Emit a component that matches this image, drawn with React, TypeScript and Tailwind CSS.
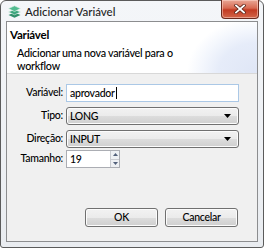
import React from "react";

function AppIcon() {
  return (
    <svg width="13" height="13" viewBox="0 0 13 13">
      <path d="M6.5 7.5 L12.5 10 L6.5 12.8 L0.5 10 Z" fill="#2f8f6a" />
      <path d="M6.5 4.5 L12.5 7 L6.5 9.8 L0.5 7 Z" fill="#3aa57c" stroke="#e9f5ef" strokeWidth="0.6" />
      <path d="M6.5 0.8 L12.5 3.6 L6.5 6.6 L0.5 3.6 Z" fill="#52bb90" stroke="#e9f5ef" strokeWidth="0.6" />
    </svg>
  );
}

function ComboArrow() {
  return (
    <svg width="7" height="4" viewBox="0 0 7 4">
      <path d="M0 0 H7 L3.5 4 Z" fill="#000" />
    </svg>
  );
}

function Combo({ value }: { value: string }) {
  return (
    <div className="flex h-[18px] items-center justify-between rounded-[3px] border border-[#707070] bg-[linear-gradient(#f2f2f2,#ebebeb_50%,#dddddd_50%,#cfcfcf)] pl-[3px] pr-[7px] shadow-[inset_0_0_0_1px_#fcfcfc]">
      <span className="leading-none">{value}</span>
      <ComboArrow />
    </div>
  );
}

export default function App() {
  return (
    <div
      className="relative flex h-[248px] w-[264px] flex-col rounded-t-[6px] rounded-b-[3px] border border-[#5b5b5b] bg-[linear-gradient(#f4f6f9,#e9ecf0)] text-[10.5px] font-medium tracking-[-0.25px] text-black"
      style={{ fontFamily: 'Lato, "Noto Sans", sans-serif' }}
    >
      {/* title bar */}
      <div className="flex h-[20px] items-start">
        <div className="ml-[7px] mt-[4px]">
          <AppIcon />
        </div>
        <span className="ml-[4px] mt-[3px] text-[11.5px] leading-[16px] tracking-normal text-[#1e1e1e]">Adicionar Variável</span>
        <div className="ml-auto mr-[4px] -mt-px flex h-[19px] w-[38px] items-center justify-center rounded-b-[4px] border border-t-0 border-[#6b2a1e] bg-[linear-gradient(#e9a796,#d86a52_45%,#c23a22_55%,#d2664a)] shadow-[inset_0_0_0_1px_rgba(255,220,210,0.5)]">
          <svg width="12" height="10" viewBox="0 0 12 10">
            <path d="M2 1.5 L10 8.5 M10 1.5 L2 8.5" stroke="#5a2418" strokeWidth="3.4" strokeLinecap="square" />
            <path d="M2 1.5 L10 8.5 M10 1.5 L2 8.5" stroke="#ffffff" strokeWidth="1.8" strokeLinecap="square" />
          </svg>
        </div>
      </div>

      {/* client */}
      <div className="mx-[5px] mb-[5px] flex flex-1 flex-col border border-[#8c8d8f] bg-[#f0f0f0]">
        {/* header */}
        <div className="h-[52px] border-b border-[#d8d8d8] bg-[radial-gradient(ellipse_70px_55px_at_100%_100%,#dfe6f6_0%,#e6ecf9_55%,#f4f7fd_80%,#ffffff_100%)] pl-[3px] pt-[6px]">
          <div className="text-[11.5px] font-bold leading-[14px] tracking-[-0.2px]">Variável</div>
          <div className="ml-[7px] mt-[4px] w-[165px] text-[10.75px] leading-[13px]">
            Adicionar uma nova variável para o workflow
          </div>
        </div>

        {/* form */}
        <div className="mt-[10px] grid grid-cols-[56px_1fr] items-center gap-x-[3px] pr-[18px]">
          <span className="text-right">Variável:</span>
          <div className="flex h-[18px] items-center border border-[#abc8e6] bg-white pl-[3px] leading-none">
            aprovador<span className="ml-px inline-block h-[12px] w-px bg-black" />
          </div>

          <span className="mt-[5px] text-right">Tipo:</span>
          <div className="mt-[5px]">
            <Combo value="LONG" />
          </div>

          <span className="mt-[5px] text-right">Direção:</span>
          <div className="mt-[5px]">
            <Combo value="INPUT" />
          </div>

          <span className="mt-[2px] text-right">Tamanho:</span>
          <div className="mt-[2px] flex h-[18px] w-[54px] items-center border border-[#abadb3] bg-white pl-[3px]">
            <span className="flex-1 leading-none">19</span>
            <div className="flex h-full w-[9px] flex-col">
              <div className="flex flex-1 items-center justify-center border-b border-l border-[#c9cbd0] bg-[#eef0f3]">
                <svg width="5" height="3" viewBox="0 0 5 3"><path d="M0 3 L2.5 0 L5 3 Z" fill="#52607a" /></svg>
              </div>
              <div className="flex flex-1 items-center justify-center border-l border-[#c9cbd0] bg-[#eef0f3]">
                <svg width="5" height="3" viewBox="0 0 5 3"><path d="M0 0 L2.5 3 L5 0 Z" fill="#52607a" /></svg>
              </div>
            </div>
          </div>
        </div>

        {/* buttons */}
        <div className="mt-auto mb-[14px] flex justify-end gap-[7px] pr-[19px]">
          <button className="h-[19px] w-[73px] rounded-[3px] border border-[#707070] bg-[linear-gradient(#f2f2f2,#ebebeb_50%,#dddddd_50%,#cfcfcf)] leading-none shadow-[inset_0_0_0_1px_#fcfcfc]">
            OK
          </button>
          <button className="h-[19px] w-[73px] rounded-[3px] border border-[#707070] bg-[linear-gradient(#f2f2f2,#ebebeb_50%,#dddddd_50%,#cfcfcf)] leading-none shadow-[inset_0_0_0_1px_#fcfcfc]">
            Cancelar
          </button>
        </div>
      </div>
    </div>
  );
}
